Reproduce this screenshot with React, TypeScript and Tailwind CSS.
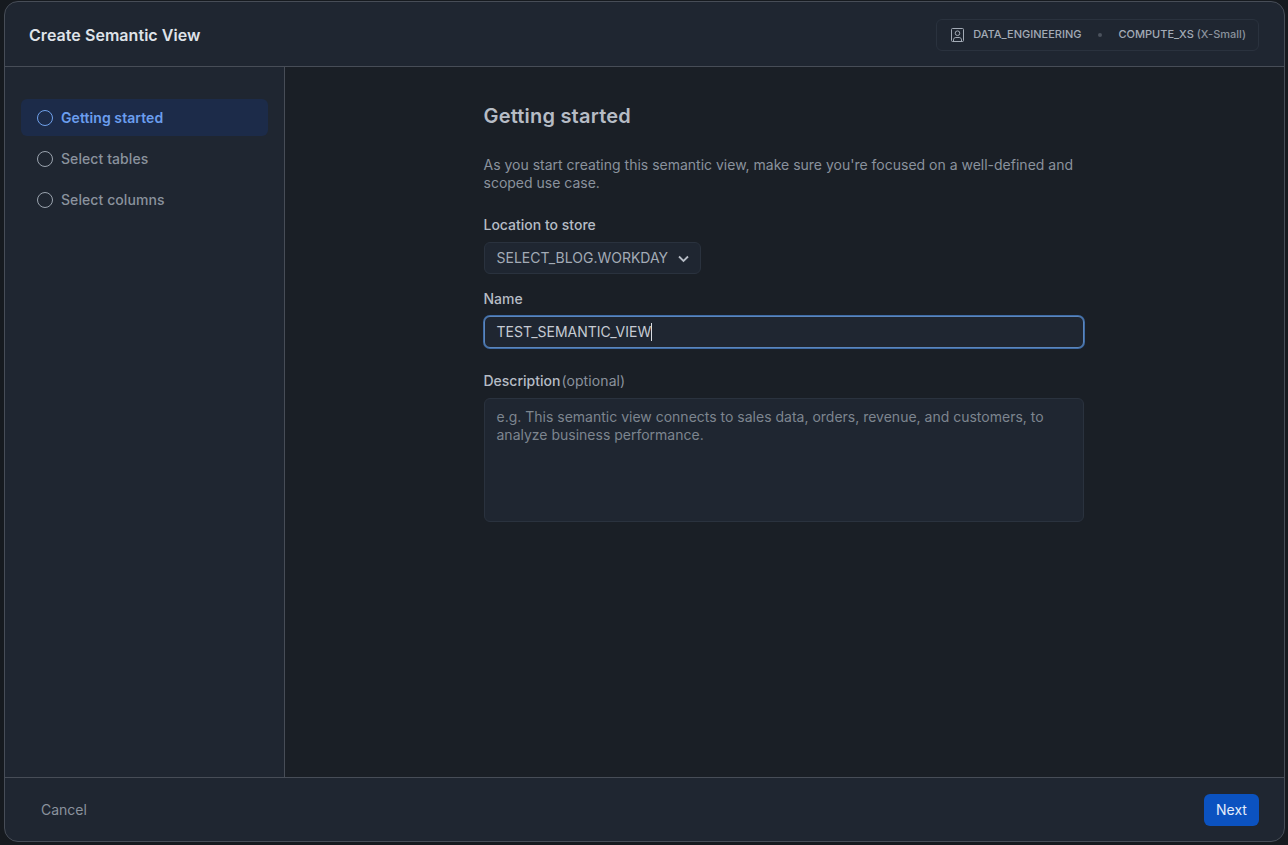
import React from 'react'

function StepCircle({ active }: { active?: boolean }) {
    return (
        <span className={`block w-4 h-4 rounded-full border ${active ? 'border-[#6fa0ea]' : 'border-[#9aa3ae]'}`} />
    )
}

function Step({ label, active }: { label: string; active?: boolean }) {
    return (
        <div className={`flex items-center gap-2 h-[37px] px-4 rounded-md text-sm tracking-[0.08px] ${active ? 'bg-[#1c2b49] text-[#6b9eee] font-semibold' : 'text-[#8a929d] font-medium'}`}>
            <StepCircle active={active} />
            <span>{label}</span>
        </div>
    )
}

function UserBadgeIcon() {
    return (
        <svg width="13" height="14" viewBox="0 0 13 14" fill="none" stroke="#a3abb6" strokeWidth="1">
            <rect x="0.5" y="0.5" width="12" height="13" rx="1" />
            <circle cx="6.5" cy="5.2" r="2.3" />
            <path d="M2.5 13.5v-1.7c0-1.3 1-2.3 2.3-2.3h3.4c1.3 0 2.3 1 2.3 2.3v1.7" />
        </svg>
    )
}

export default function App() {
    return (
        <div className="w-[1288px] h-[845px] overflow-hidden bg-[#161a1f] pt-px pl-[4px] pr-[3px] pb-[3px] font-['Inter',sans-serif]">
            <div className="w-full h-full flex flex-col rounded-[14px] overflow-hidden border border-[#474d57] bg-[#1f2631]">
                <header className="h-[65px] shrink-0 flex items-center justify-between pt-px pl-6 pr-[25px] border-b border-[#474d57]">
                    <h1 className="text-base font-semibold tracking-[0.05px] text-[#dfe3e9]">Create Semantic View</h1>
                    <div className="flex items-center h-[32px] pl-[14px] pr-[12px] rounded-md border border-[#2a323e] text-[11px] font-medium text-[#a3abb6]">
                        <UserBadgeIcon />
                        <span className="ml-[9px]">DATA_ENGINEERING</span>
                        <span className="mx-[16.5px] w-1 h-1 rounded-full bg-[#4b525d]" />
                        <span>COMPUTE_XS <span className="text-[#8a929d]">(X-Small)</span></span>
                    </div>
                </header>

                <div className="flex-1 flex min-h-0">
                    <aside className="w-[280px] shrink-0 border-r border-[#474d57] pt-[32px] pl-4 pr-4 flex flex-col gap-1">
                        <Step label="Getting started" active />
                        <Step label="Select tables" />
                        <Step label="Select columns" />
                    </aside>

                    <main className="flex-1 bg-[#1a1f26] flex justify-center pr-[2px]">
                        <div className="w-[600px] pt-[35px]">
                            <h2 className="text-xl font-semibold tracking-[0.2px] text-[#b6bcc5] leading-[28px]">Getting started</h2>
                            <p className="mt-[26px] text-sm leading-[18px] text-[#8a929d]">
                                As you start creating this semantic view, make sure you're focused on a well-defined and scoped use case.
                            </p>

                            <label className="block mt-[24px] text-sm leading-[18px] font-medium text-[#b6bcc5]">Location to store</label>
                            <div className="mt-2 w-[217px] h-[32px] flex items-center justify-between pl-3 pr-[10px] rounded-md border border-[#2a323e] bg-[#1f2631] text-sm text-[#a3abb6]">
                                <span>SELECT_BLOG.WORKDAY</span>
                                <svg width="13" height="13" viewBox="0 0 13 13" fill="none" stroke="#b6bcc5" strokeWidth="1.8">
                                    <path d="M2 4.5l4.5 4.5 4.5-4.5" />
                                </svg>
                            </div>

                            <label className="block mt-4 text-sm leading-[18px] font-medium text-[#b6bcc5]">Name</label>
                            <div className="mt-2 h-[32px] flex items-center px-3 rounded-md border border-[#5b86bd] ring-1 ring-[#3f6ca6] bg-[#1f2631] text-sm text-[#c6cbd3]">
                                <span>TEST_SEMANTIC_VIEW</span>
                                <span className="w-px h-[18px] bg-[#d8dce2]" />
                            </div>

                            <label className="block mt-[24px] text-sm leading-[18px] font-medium text-[#b6bcc5]">
                                Description<span className="ml-px font-normal tracking-[0.1px] text-[#8a929d]">(optional)</span>
                            </label>
                            <div className="mt-2 h-[124px] px-3 py-[9px] rounded-md border border-[#2a323e] bg-[#1f2631] text-sm leading-[18px] text-[#7d858f]">
                                e.g. This semantic view connects to sales data, orders, revenue, and customers, to analyze business performance.
                            </div>
                        </div>
                    </main>
                </div>

                <footer className="h-[64px] shrink-0 flex items-center justify-between pl-9 pr-[25px] border-t border-[#474d57]">
                    <button className="text-sm text-[#8a929d]">Cancel</button>
                    <button className="h-8 w-[55px] rounded-md bg-[#0b52c0] text-sm font-normal text-[#e4edfb]">Next</button>
                </footer>
            </div>
        </div>
    )
}
